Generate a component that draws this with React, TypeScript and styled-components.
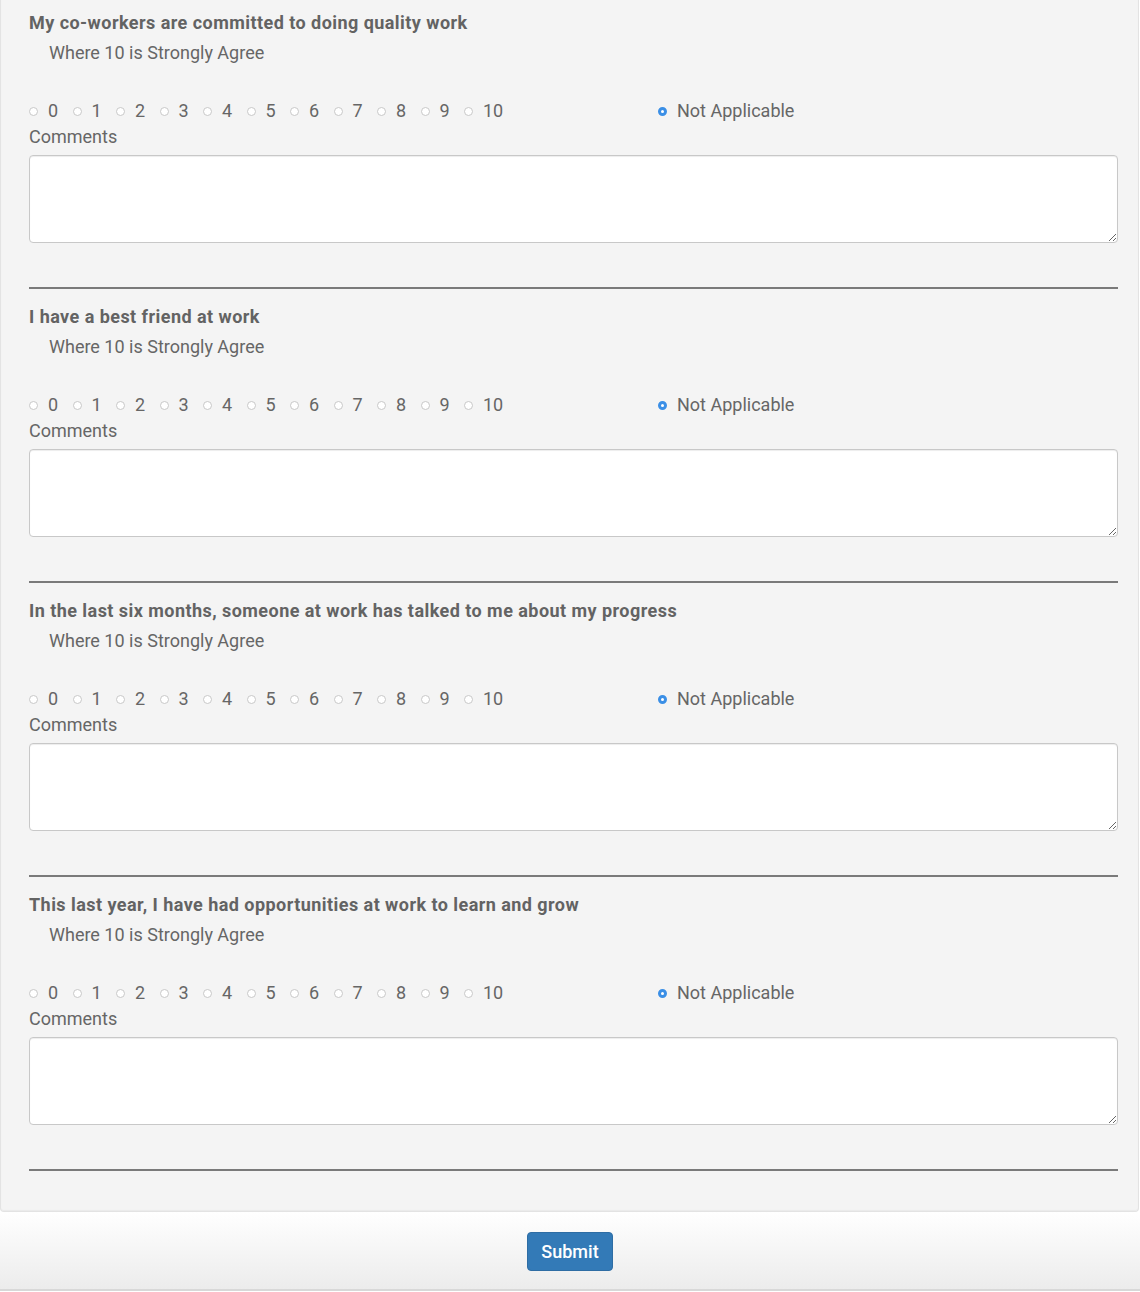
import React from "react";
import styled, { createGlobalStyle } from "styled-components";

const GlobalStyle = createGlobalStyle`
  html, body { margin: 0; padding: 0; background: #f2f2f2; }
  body { font-family: Roboto, "Liberation Sans", Arial, sans-serif; color: #666; }
  * { box-sizing: border-box; }
`;

const Page = styled.div`
  width: 1140px;
  min-height: 1292px;
  background: #fff;
`;

const Panel = styled.div`
  background: #f4f4f4;
  border: 1px solid #e3e3e3;
  border-top: none;
  border-radius: 0 0 4px 4px;
  margin-right: 1px;
  padding: 11px 20px 24px 28px;
  box-shadow: inset 0 -1px 1px rgba(0, 0, 0, 0.04);
`;

const Question = styled.div`
  display: flex;
  flex-direction: column;
`;

const Title = styled.div`
  font-size: 18px;
  line-height: 24px;
  font-weight: 700;
  letter-spacing: 0.45px;
  color: #636363;
`;

const Subtitle = styled.div`
  font-size: 18px;
  line-height: 24px;
  margin-top: 6px;
  padding-left: 20px;
  color: #666;
`;

const ScaleRow = styled.div`
  display: flex;
  align-items: center;
  margin-top: 34px;
  height: 24px;
`;

const ScaleGroup = styled.div`
  display: flex;
  align-items: center;
  width: 629px;
`;

const Option = styled.label<{ $wide?: boolean }>`
  display: flex;
  align-items: center;
  gap: 10px;
  width: ${(p) => (p.$wide ? "auto" : "43.5px")};
  font-size: 18px;
  line-height: 24px;
  color: #666;
  cursor: pointer;
`;

const Radio = styled.span<{ $checked?: boolean }>`
  display: inline-block;
  width: 9px;
  height: 9px;
  border-radius: 50%;
  flex: none;
  background: #fff;
  border: ${(p) => (p.$checked ? "3px solid #3b8fe6" : "1px solid #c8c8c8")};
`;

const CommentsLabel = styled.div`
  font-size: 18px;
  line-height: 24px;
  margin-top: 2px;
  color: #666;
`;

const TextArea = styled.textarea`
  display: block;
  margin-top: 6px;
  width: 100%;
  height: 88px;
  border: 1px solid #c8c8c8;
  border-radius: 4px;
  background: #fff;
  box-shadow: inset 0 1px 1px rgba(0, 0, 0, 0.075);
  font-family: inherit;
  font-size: 16px;
  resize: vertical;
  outline: none;
`;

const Divider = styled.hr`
  border: none;
  height: 2px;
  background: #7a7a7a;
  margin: 44px 0 16px;
`;

const Footer = styled.div`
  height: 79px;
  padding-top: 20px;
  display: flex;
  justify-content: center;
  align-items: flex-start;
  background: linear-gradient(#ffffff, #ececec);
  border-bottom: 2px solid #d8d8d8;
`;

const SubmitButton = styled.button`
  width: 86px;
  height: 39px;
  background: #337ab7;
  border: 1px solid #2e6da4;
  border-radius: 4px;
  color: #fff;
  font-family: inherit;
  font-size: 18px;
  font-weight: 500;
  padding: 0;
  cursor: pointer;
`;

const questions = [
  "My co-workers are committed to doing quality work",
  "I have a best friend at work",
  "In the last six months, someone at work has talked to me about my progress",
  "This last year, I have had opportunities at work to learn and grow",
];

const scale = Array.from({ length: 11 }, (_, i) => i);

export default function App() {
  return (
    <Page>
      <GlobalStyle />
      <Panel>
        {questions.map((q) => (
          <React.Fragment key={q}>
            <Question>
              <Title>{q}</Title>
              <Subtitle>Where 10 is Strongly Agree</Subtitle>
              <ScaleRow>
                <ScaleGroup>
                  {scale.map((n) => (
                    <Option key={n}>
                      <Radio />
                      {n}
                    </Option>
                  ))}
                </ScaleGroup>
                <Option $wide>
                  <Radio $checked />
                  Not Applicable
                </Option>
              </ScaleRow>
              <CommentsLabel>Comments</CommentsLabel>
              <TextArea />
            </Question>
            <Divider />
          </React.Fragment>
        ))}
      </Panel>
      <Footer>
        <SubmitButton>Submit</SubmitButton>
      </Footer>
    </Page>
  );
}
